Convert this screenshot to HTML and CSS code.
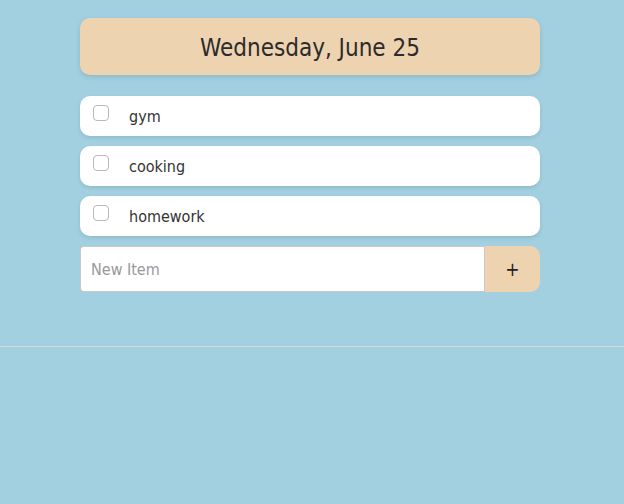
FILE: index.html
```html
<!DOCTYPE html>
<html>
<head>
<meta charset="utf-8">
<link rel="stylesheet" href="styles.css">
</head>
<body>
<main class="app">
  <header class="date-card"><h1 class="date">Wednesday, June 25</h1></header>
  <ul class="list">
    <li class="item"><input type="checkbox" class="check"><span class="label">gym</span></li>
    <li class="item"><input type="checkbox" class="check"><span class="label">cooking</span></li>
    <li class="item"><input type="checkbox" class="check"><span class="label">homework</span></li>
  </ul>
  <form class="new-form">
    <input type="text" class="new-input" placeholder="New Item">
    <button type="button" class="add-btn">+</button>
  </form>
</main>
<hr class="divider">
</body>
</html>
```
FILE: styles.css
```css
html, body {
  margin: 0;
  padding: 0;
  background: #a2d0e0;
  font-family: "DejaVu Sans Condensed", "DejaVu Sans", sans-serif;
  color: #2b2b2b;
}
.app {
  width: 460px;
  margin: 0 84px 0 80px;
  padding-top: 18px;
  height: 328px;
  box-sizing: border-box;
  display: flex;
  flex-direction: column;
}
.date-card {
  background: #eed3b0;
  border-radius: 10px;
  height: 57px;
  display: flex;
  align-items: center;
  justify-content: center;
  box-shadow: 0 2px 5px rgba(0, 0, 0, 0.12);
}
.date {
  margin: 0;
  padding-top: 2px;
  font-size: 24px;
  font-weight: normal;
  color: #2b2b2b;
}
.list {
  list-style: none;
  margin: 21px 0 0;
  padding: 0;
  display: flex;
  flex-direction: column;
  gap: 10px;
}
.item {
  background: #fff;
  border-radius: 10px;
  height: 40px;
  display: flex;
  align-items: center;
  box-shadow: 0 2px 4px rgba(0, 0, 0, 0.1);
}
.check {
  appearance: none;
  -webkit-appearance: none;
  width: 16px;
  height: 16px;
  margin: 0 20px 6px 13px;
  border: 1px solid #b8b8b8;
  border-radius: 4px;
  background: #fff;
  box-sizing: border-box;
}
.label {
  font-size: 16px;
  color: #333;
}
.new-form {
  margin-top: 10px;
  display: flex;
  height: 46px;
}
.new-input {
  flex: 1;
  border: 1px solid #c8c8c8;
  border-right: none;
  border-radius: 4px 0 0 4px;
  padding: 0 10px;
  font-family: inherit;
  font-size: 16px;
  color: #333;
  outline: none;
}
.new-input::placeholder {
  color: #999;
}
.add-btn {
  width: 56px;
  border: none;
  border-left: 1px solid #c8c8c8;
  background: #eed3b0;
  border-radius: 0 10px 10px 0;
  font-size: 19px;
  font-family: inherit;
  color: #222;
  padding: 0;
}
.divider {
  margin: 18px 0 0;
  border: none;
  border-top: 1px solid #d9d9d9;
  height: 0;
}
```
